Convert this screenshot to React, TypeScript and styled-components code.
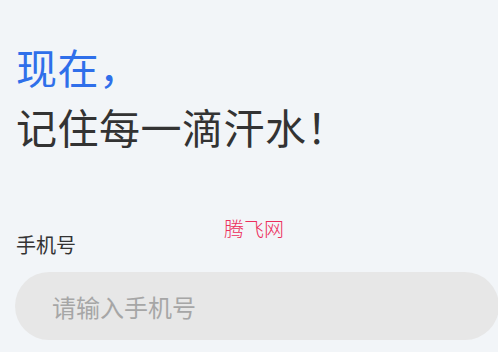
import styled, { createGlobalStyle } from "styled-components";

const GlobalStyle = createGlobalStyle`
  html, body {
    margin: 0;
    padding: 0;
    background: #f2f5f8;
  }
  body {
    font-family: "Noto Sans CJK SC", "Noto Sans", sans-serif;
  }
`;

const Page = styled.div`
  position: relative;
  width: 498px;
  height: 352px;
  overflow: hidden;
  padding: 36px 0 0 16px;
  box-sizing: border-box;
`;

const Title = styled.h1`
  margin: 0;
  font-size: 41px;
  letter-spacing: 0.5px;
  font-weight: 400;
  line-height: 60px;
  color: #333;
`;

const Accent = styled.span`
  display: block;
  color: #2f6fea;
`;

const Field = styled.div`
  margin-top: 75px;
  display: flex;
  flex-direction: column;
  gap: 13px;
`;

const Label = styled.label`
  font-size: 20px;
  line-height: 28px;
  color: #333;
`;

const Input = styled.input`
  box-sizing: border-box;
  margin-left: -1px;
  width: 484px;
  height: 68px;
  border: none;
  outline: none;
  border-radius: 34px;
  background: #e7e7e7;
  padding: 0 0 0 37px;
  font-family: inherit;
  font-size: 24px;
  color: #333;

  &::placeholder {
    color: #a6a6a6;
  }
`;

const Watermark = styled.div`
  position: absolute;
  left: 224px;
  top: 215px;
  font-size: 20px;
  font-weight: 300;
  line-height: 28px;
  color: #ec2f5c;
  pointer-events: none;
`;

export default function App() {
  return (
    <>
      <GlobalStyle />
      <Page>
        <Title>
          <Accent>现在，</Accent>
          记住每一滴汗水！
        </Title>
        <Field>
          <Label htmlFor="phone">手机号</Label>
          <Input id="phone" placeholder="请输入手机号" />
        </Field>
        <Watermark>腾飞网</Watermark>
      </Page>
    </>
  );
}
